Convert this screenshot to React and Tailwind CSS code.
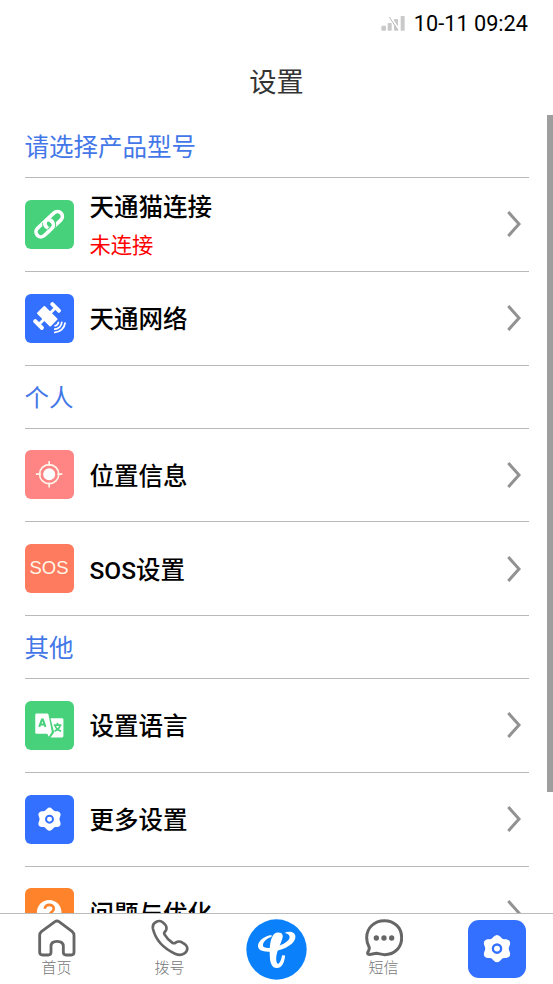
import React from 'react';

const LinkIcon = () => (
  <svg viewBox="0 0 148 148" className="w-full h-full" fill="none">
    <g transform="translate(73 73) rotate(-43)" strokeWidth="11" stroke="#fff">
      <rect x="-49" y="-15" width="61" height="30" rx="15" />
      <rect x="-12" y="-15" width="61" height="30" rx="15" stroke="#46d17a" strokeWidth="17" />
      <path d="M-12 -15H-3A15 15 0 0 1 12 0" />
      <rect x="-12" y="-15" width="61" height="30" rx="15" />
      <path d="M-14 15H-3A15 15 0 0 0 12 0" stroke="#46d17a" strokeWidth="17" />
      <path d="M-22 15H-3A15 15 0 0 0 12 0V-2" />
      <path d="M-12 1V0A15 15 0 0 1 -5 -12" />
    </g>
  </svg>
);

const SatelliteIcon = () => (
  <svg viewBox="0 0 148 148" className="w-full h-full" fill="none">
    <g transform="translate(67 66) rotate(45)" fill="#fff">
      <rect x="-28" y="-16" width="58" height="33" rx="3" />
      <rect x="-4" y="-33" width="9" height="66" />
      <rect x="-20" y="-42" width="40" height="12" rx="5" />
      <rect x="-20" y="31" width="40" height="12" rx="5" />
    </g>
    <g stroke="#fff" strokeWidth="5.5" strokeLinecap="round">
      <path d="M91 96A12 12 0 0 0 101 86" />
      <path d="M90 106A22 22 0 0 0 111 86" />
      <path d="M90 116A32 32 0 0 0 121 88" />
    </g>
  </svg>
);

const LocationIcon = () => (
  <svg viewBox="0 0 148 148" className="w-full h-full" fill="none">
    <circle cx="73" cy="73" r="29" stroke="#fff5e8" strokeWidth="5" />
    <circle cx="73" cy="73" r="18" fill="#fff" />
    <path d="M73 33v15M73 98v15M33 73h15M98 73h15" stroke="#fff5e8" strokeWidth="5" />
  </svg>
);

const LanguageIcon = () => (
  <svg viewBox="0 0 148 148" className="w-full h-full" fill="none">
    <path d="M35 38H67Q70 38 71 41L81 94L72 108L67 99H35Q31 99 31 95V42Q31 38 35 38Z" fill="#fff" />
    <path d="M77 52H112Q116 52 116 56V106Q116 110 112 110H77L88 95Z" fill="#fff" />
    <path d="M43 78L51 56H54L62 78M46 71H59" stroke="#46d17a" strokeWidth="6" />
    <path d="M87 73H110M98 66V73M89 91Q104 84 106 74M91 75Q95 87 109 91" stroke="#46d17a" strokeWidth="5" />
  </svg>
);

const GearIcon = () => (
  <svg viewBox="0 0 148 148" className="w-full h-full" fill="none">
    <path
      d="M66 42Q74 34 82 42L87 47Q89 49 92 49L98 49Q110 52 107 63L105 68Q103 73 105 78L107 83Q110 94 98 97L92 97Q89 97 87 99L82 104Q74 112 66 104L61 99Q59 97 56 97L50 97Q38 94 41 83L43 78Q45 73 43 68L41 63Q38 52 50 49L56 49Q59 49 61 47Z"
      fill="#fff"
    />
    <circle cx="74" cy="73" r="10.5" stroke="#3470ff" strokeWidth="6" />
  </svg>
);

const HelpIcon = () => (
  <svg viewBox="0 0 148 148" className="w-full h-full" fill="none">
    <circle cx="73" cy="73" r="37" fill="#fff" />
    <path d="M60 63C60 47 87 47 87 63C87 72 73 73 73 85" stroke="#ff832b" strokeWidth="8" />
    <circle cx="73" cy="96" r="5" fill="#ff832b" />
  </svg>
);

const SosIcon = () => (
  <span className="font-['Liberation_Sans'] text-[18.5px] leading-none text-[#fff5e8]">SOS</span>
);

const Chevron = () => (
  <svg viewBox="0 0 16 28" className="w-4 h-7 mr-[7px] shrink-0" fill="none">
    <path d="M2.3 2L13 14L2.3 26" stroke="#929292" strokeWidth="3" />
  </svg>
);

const SignalIcon = () => (
  <svg viewBox="0 0 72 48" className="w-6 h-4 mr-[9px]" fill="none">
    <g fill="#c9c9c9">
      <rect x="1" y="29" width="14" height="15" rx="3" />
      <rect x="20" y="21" width="12" height="23" rx="2" />
      <rect x="39" y="9" width="12" height="35" rx="2" />
      <rect x="59" y="0" width="12" height="44" rx="2" />
    </g>
    <path d="M28 2L55 42" stroke="#fff" strokeWidth="5" />
    <path d="M25 3L51 43" stroke="#bdbdbd" strokeWidth="3" />
  </svg>
);

const HomeIcon = () => (
  <svg viewBox="0 0 114 114" className="w-[38px] h-[38px]" fill="none" stroke="#666" strokeWidth="8.5" strokeLinejoin="round">
    <path d="M51 8Q57 4 63 8L102 37Q108 42 108 49V100Q108 108 100 108H84Q76 108 76 100V82Q76 67 57 67Q39 67 39 82V100Q39 108 31 108H14Q5 108 5 100V49Q5 42 11 37Z" />
  </svg>
);

const PhoneIcon = () => (
  <svg viewBox="0 0 114 114" className="w-[38px] h-[38px]" fill="none" stroke="#666" strokeWidth="8" strokeLinejoin="round">
    <path d="M15 9Q25 3 34 9Q49 20 46 31Q45 35 41 39Q38 43 41 47Q50 63 65 72Q70 74 74 71Q84 64 94 71Q109 79 109 89Q108 99 99 104Q88 111 72 104Q18 79 6 30Q3 15 15 9Z" />
  </svg>
);

const MessageIcon = () => (
  <svg viewBox="0 0 114 114" className="w-[38px] h-[38px]" fill="none">
    <path
      d="M58 5C88 5 110 26 110 56C110 86 88 107 59 107C49 107 41 103 34 103C26 104 18 107 11 106Q6 105 9 99Q13 92 13 86C8 77 5 68 5 56C5 27 28 5 58 5Z"
      stroke="#666"
      strokeWidth="9"
      strokeLinejoin="round"
    />
    <g fill="#666">
      <circle cx="34" cy="57" r="8" />
      <circle cx="57" cy="57" r="8" />
      <circle cx="80" cy="57" r="8" />
    </g>
  </svg>
);

const TelecomLogo = () => (
  <svg viewBox="0 0 182 184" className="w-[61px] h-[61px]">
    <circle cx="91" cy="92" r="91" fill="#0a81fb" />
    <g fill="#fff">
      <path d="M95 41C108 40 113 49 108 61C101 82 91 99 90 119C90 131 94 138 98 134C104 128 106 118 108 109L117 110C115 132 107 148 92 148C77 148 71 131 71 113C70 90 71 67 78 54C82 46 87 41 95 41Z" />
      <path d="M76 48C53 51 35 67 35 81C35 97 57 102 85 97C120 90 148 73 148 54C148 39 130 35 115 42C127 44 133 50 130 58C126 69 105 81 80 86C62 89 50 87 50 79C50 68 62 58 76 54Z" />
    </g>
  </svg>
);

const sections = [
  {
    title: '请选择产品型号',
    items: [
      { label: '天通猫连接', status: '未连接', icon: LinkIcon, color: 'bg-[#46d17a]' },
      { label: '天通网络', icon: SatelliteIcon, color: 'bg-[#3470ff]' },
    ],
  },
  {
    title: '个人',
    items: [
      { label: '位置信息', icon: LocationIcon, color: 'bg-[#ff8585]' },
      { label: 'SOS设置', icon: SosIcon, color: 'bg-[#ff7b5f]' },
    ],
  },
  {
    title: '其他',
    items: [
      { label: '设置语言', icon: LanguageIcon, color: 'bg-[#46d17a]' },
      { label: '更多设置', icon: GearIcon, color: 'bg-[#3470ff]' },
      { label: '问题与优化', icon: HelpIcon, color: 'bg-[#ff832b]' },
    ],
  },
];

function SettingRow({ item }) {
  const Icon = item.icon;
  return (
    <div className="flex items-center h-[93.75px] border-b border-[#b9b9bd]">
      <div className={`flex items-center justify-center w-[49px] h-[49px] rounded-[6px] overflow-hidden shrink-0 ${item.color}`}>
        <Icon />
      </div>
      <div className="flex-1 ml-4 pt-1">
        <div className="text-[24.5px] leading-[36px] font-medium text-black">{item.label}</div>
        {item.status && <div className="mt-[3px] text-[21.3px] leading-[34px] text-[#f00]">{item.status}</div>}
      </div>
      <Chevron />
    </div>
  );
}

function Tab({ label, children }) {
  return (
    <div className="flex flex-col items-center pt-[5px]">
      {children}
      <span className="mt-0.5 text-[15px] leading-[18px] font-light text-[#777]">{label}</span>
    </div>
  );
}

export default function App() {
  return (
    <div className="flex flex-col w-full h-screen overflow-hidden bg-white font-[Roboto,'Noto_Sans_CJK_SC',sans-serif]">
      <div className="flex items-center justify-end h-[47px] pr-[25px] shrink-0">
        <SignalIcon />
        <span className="pt-0.5 text-[21.7px] text-black">10-11 09:24</span>
      </div>
      <h1 className="h-[68px] shrink-0 text-center text-[27.2px] leading-[72px] text-[#333]">设置</h1>

      <div className="flex flex-1 min-h-0 overflow-hidden">
        <div className="flex-1 ml-[24.5px] mr-[18.5px]">
          {sections.map((section) => (
            <div key={section.title}>
              <h2 className="h-[63px] border-b border-[#b9b9bd] text-[24.5px] leading-[66px] text-[#4377e8]">
                {section.title}
              </h2>
              {section.items.map((item) => (
                <SettingRow key={item.label} item={item} />
              ))}
            </div>
          ))}
        </div>
        <div className="w-1.5 h-[677px] bg-[#9e9e9e]" />
      </div>

      <nav className="grid grid-cols-[113px_113px_101px_113px_113px] h-[71px] shrink-0 border-t border-[#bbb] bg-white">
        <Tab label="首页"><HomeIcon /></Tab>
        <Tab label="拨号"><PhoneIcon /></Tab>
        <div className="flex items-center justify-center pr-px">
          <TelecomLogo />
        </div>
        <Tab label="短信"><MessageIcon /></Tab>
        <div className="flex items-center justify-center">
          <div className="w-[58px] h-[58px] rounded-[11px] bg-[#3470ff]">
            <GearIcon />
          </div>
        </div>
      </nav>
    </div>
  );
}
